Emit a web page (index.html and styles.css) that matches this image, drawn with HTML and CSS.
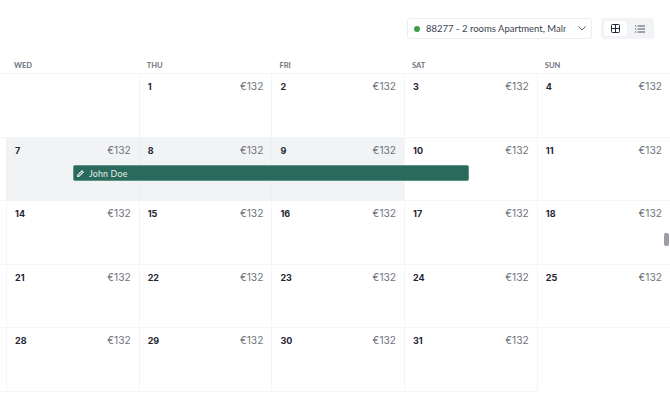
FILE: index.html
```html
<!DOCTYPE html>
<html lang="en">
<head>
<meta charset="utf-8">
<title>Calendar</title>
<link rel="stylesheet" href="styles.css">
</head>
<body>
<div class="page">
  <div class="toolbar">
    <div class="select">
      <span class="dot"></span>
      <span class="select-text">88277 - 2 rooms Apartment, Malmö</span>
      <svg class="chev" width="8" height="5" viewBox="0 0 8 5"><path d="M.7 .7L4 4l3.3-3.3" fill="none" stroke="#5b6370" stroke-width="1" stroke-linecap="round" stroke-linejoin="round"/></svg>
    </div>
    <div class="toggle">
      <button class="tbtn active"><svg width="9" height="9" viewBox="0 0 9 9"><rect x=".5" y=".5" width="8" height="8" rx="1" fill="none" stroke="#1f2937" stroke-width="1"/><path d="M4.5 .5v8M.5 4.5h8" stroke="#1f2937" stroke-width="1"/></svg></button>
      <button class="tbtn"><svg width="10" height="8" viewBox="0 0 10 8"><path d="M2.5 1H10M2.5 4H10M2.5 7H10" stroke="#4b5563" stroke-width="1"/><path d="M0 1h1.2M0 4h1.2M0 7h1.2" stroke="#4b5563" stroke-width="1"/></svg></button>
    </div>
  </div>
  <div class="weekdays">
    <div class="wd">WED</div><div class="wd">THU</div><div class="wd">FRI</div><div class="wd">SAT</div><div class="wd">SUN</div>
  </div>
  <div class="grid">
    <div class="gutter"></div><div class="cell empty"></div>
    <div class="cell"><b>1</b><span>€132</span></div>
    <div class="cell"><b>2</b><span>€132</span></div>
    <div class="cell"><b>3</b><span>€132</span></div>
    <div class="cell"><b>4</b><span>€132</span></div>
    <div class="gutter"></div><div class="cell shade"><b>7</b><span>€132</span></div>
    <div class="cell shade"><b>8</b><span>€132</span></div>
    <div class="cell shade"><b>9</b><span>€132</span></div>
    <div class="cell"><b>10</b><span>€132</span></div>
    <div class="cell"><b>11</b><span>€132</span></div>
    <div class="gutter"></div><div class="cell"><b>14</b><span>€132</span></div>
    <div class="cell"><b>15</b><span>€132</span></div>
    <div class="cell"><b>16</b><span>€132</span></div>
    <div class="cell"><b>17</b><span>€132</span></div>
    <div class="cell"><b>18</b><span>€132</span></div>
    <div class="gutter"></div><div class="cell"><b>21</b><span>€132</span></div>
    <div class="cell"><b>22</b><span>€132</span></div>
    <div class="cell"><b>23</b><span>€132</span></div>
    <div class="cell"><b>24</b><span>€132</span></div>
    <div class="cell"><b>25</b><span>€132</span></div>
    <div class="gutter"></div><div class="cell"><b>28</b><span>€132</span></div>
    <div class="cell"><b>29</b><span>€132</span></div>
    <div class="cell"><b>30</b><span>€132</span></div>
    <div class="cell"><b>31</b><span>€132</span></div>
    <div class="cell blank"></div>
    <div class="event">
      <svg width="7" height="7" viewBox="0 0 8 8"><path d="M5.6 0.9l1.5 1.5-4.6 4.6-2 .5.5-2z" fill="none" stroke="#eef5f2" stroke-width="1.2" stroke-linejoin="round"/></svg>
      <span>John Doe</span>
    </div>
  </div>
  <div class="thumb"></div>
</div>
</body>
</html>
```
FILE: styles.css
```css
* { box-sizing: border-box; }
html, body { margin: 0; padding: 0; overflow: hidden; background: #fff; }
body { font-family: Lato, "Open Sans", sans-serif; color: #1f2433; }
.page { position: relative; width: 670px; height: 415px; padding-top: 18px; }
.toolbar { display: flex; justify-content: flex-end; gap: 9px; padding-right: 16px; height: 21px; }
.select { width: 185px; height: 21px; display: flex; align-items: center; padding: 0 7px 0 6px; background: #fff; border: 1px solid #eceef1; border-radius: 3px; }
.dot { width: 6px; height: 6px; border-radius: 50%; background: #3f9e45; flex: none; margin-right: 6px; }
.select-text { width: 140px; flex: none; overflow: hidden; white-space: nowrap; font-size: 9.5px; color: #3d4350; margin-right: 11.5px; }
.chev { flex: none; }
.toggle { width: 53px; height: 21px; background: #f2f3f5; border-radius: 3px; display: flex; padding: 3px; gap: 1px; }
.tbtn { flex: 1; border: 0; padding: 0; background: transparent; display: flex; align-items: center; justify-content: center; border-radius: 3px; }
.tbtn.active { background: #fff; }
.weekdays { display: grid; grid-template-columns: repeat(5, 132.7px); margin-top: 21px; padding-left: 6px; height: 14px; border-bottom: 1px solid #f2f3f5; }
.wd { padding-left: 8px; font-size: 7.6px; line-height: 9px; padding-top: 1px; color: #6e7480; font-weight: 700; }
.grid { position: relative; display: grid; grid-template-columns: 6px repeat(4, 132.7px) 1fr; grid-auto-rows: 63.6px; }
.gutter { border-bottom: 1px solid #f4f5f6; }
.cell { border-left: 1px solid #f4f5f6; border-bottom: 1px solid #f4f5f6; padding: 6px 8px 0 8px; display: flex; justify-content: space-between; align-items: flex-start; }
.cell.empty { border-left: 0; }
.cell.shade { background: #f2f3f5; border-left-color: #eceef0; border-bottom-color: #f2f3f5; }
.cell.blank { border-bottom: 0; }
.cell b { font-family: Inter, sans-serif; font-size: 9px; line-height: 13px; font-weight: 700; color: #1f2433; }
.cell span { font-family: Inter, sans-serif; font-size: 10.2px; line-height: 13px; color: #6f737b; }
.event { position: absolute; left: 72.5px; top: 91px; width: 396.5px; height: 16px; background: #2a6a5c; border: 1px solid #5d9486; border-radius: 2px; display: flex; align-items: center; padding-left: 3.5px; gap: 5px; color: #e6f0ed; font-size: 8.8px; letter-spacing: 0.2px; }
.thumb { position: absolute; left: 664px; top: 233px; width: 5px; height: 13px; background: #9b9ea6; border-radius: 2px; }
```
